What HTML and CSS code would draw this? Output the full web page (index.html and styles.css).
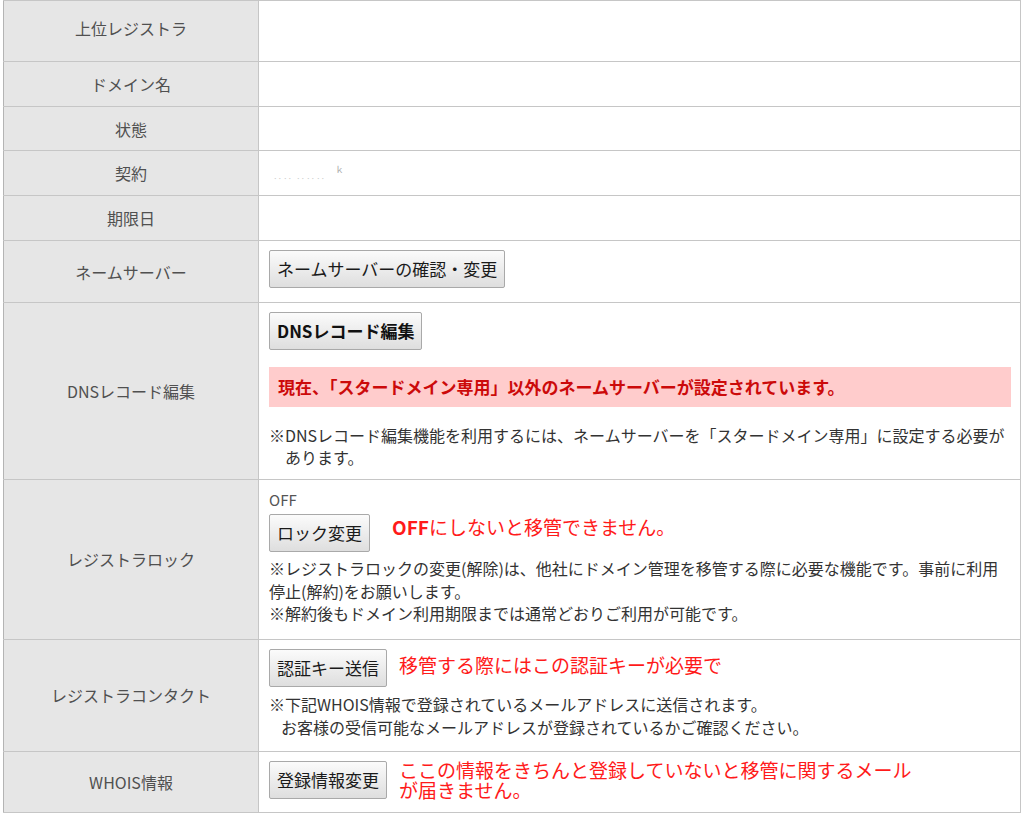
FILE: index.html
```html
<!DOCTYPE html>
<html lang="ja">
<head>
<meta charset="utf-8">
<title>ドメイン情報</title>
<link rel="stylesheet" href="styles.css">
</head>
<body>
<div class="page">
<table class="info">
  <tr class="r-top"><th>上位レジストラ</th><td></td></tr>
  <tr class="r-45"><th>ドメイン名</th><td></td></tr>
  <tr class="r-44"><th>状態</th><td></td></tr>
  <tr class="r-45"><th>契約</th><td class="contract"><span class="blur">‥‥ ‥‥‥</span><span class="blur2">ｋ</span></td></tr>
  <tr class="r-45"><th>期限日</th><td></td></tr>
  <tr><th>ネームサーバー</th><td class="cell-ns"><button class="btn">ネームサーバーの確認・変更</button></td></tr>
  <tr><th>DNSレコード編集</th><td class="cell-dns">
    <button class="btn btn-bold">DNSレコード編集</button>
    <div class="alert">現在、「スタードメイン専用」以外のネームサーバーが設定されています。</div>
    <p class="note hang">※DNSレコード編集機能を利用するには、ネームサーバーを「スタードメイン専用」に設定する必要が<br>あります。</p>
  </td></tr>
  <tr><th>レジストラロック</th><td class="cell-lock">
    <div class="status">OFF</div>
    <div class="btn-row">
      <button class="btn">ロック変更</button>
      <span class="memo memo-lock"><b>OFF</b>にしないと移管できません。</span>
    </div>
    <p class="note note-lock">※レジストラロックの変更(解除)は、他社にドメイン管理を移管する際に必要な機能です。事前に利用<br>停止(解約)をお願いします。<br>※解約後もドメイン利用期限までは通常どおりご利用が可能です。</p>
  </td></tr>
  <tr><th>レジストラコンタクト</th><td class="cell-contact">
    <div class="btn-row">
      <button class="btn">認証キー送信</button>
      <span class="memo memo-key">移管する際にはこの認証キーが必要で</span>
    </div>
    <p class="note note-contact">※下記WHOIS情報で登録されているメールアドレスに送信されます。<br><span class="indent">お客様の受信可能なメールアドレスが登録されているかご確認ください。</span></p>
  </td></tr>
  <tr><th>WHOIS情報</th><td class="cell-whois">
    <div class="btn-row">
      <button class="btn">登録情報変更</button>
      <div class="memo memo-whois">
        <div class="memo-line">ここの情報をきちんと登録していないと移管に関するメール</div>
        <div class="memo-line">が届きません。</div>
      </div>
    </div>
  </td></tr>
</table>
</div>
</body>
</html>
```

FILE: styles.css
```css
html, body {
  margin: 0;
  padding: 0;
  background: #fff;
}
body {
  font-family: "Noto Sans CJK JP", "Noto Sans", sans-serif;
  color: #3a3a3a;
}
.page {
  padding-left: 3px;
  width: 1018px;
}
.info {
  border-collapse: collapse;
  table-layout: fixed;
  width: 1018px;
}
.info th,
.info td {
  border: 1px solid #c6c6c6;
}
.info th {
  width: 254px;
  background: #e6e6e6;
  font-weight: normal;
  font-size: 16px;
  color: #505050;
  text-align: center;
  vertical-align: middle;
  padding: 0;
  border-left-color: #b4b4b4;
}
.info td {
  padding: 9px 9px 0 10px;
  vertical-align: top;
  background: #fff;
}
.r-top { height: 61px; }
.r-top th { padding-bottom: 6px; }
.r-45 { height: 45px; }
.r-44 { height: 44px; }
.r-top td, .r-45 td, .r-44 td { padding: 0; }

.contract {
  position: relative;
}
.blur {
  position: absolute;
  left: 14px;
  top: 21px;
  font-size: 9px;
  letter-spacing: 1px;
  color: #c9c9c9;
}
.blur2 {
  position: absolute;
  left: 76px;
  top: 12px;
  font-size: 9px;
  color: #aaa;
}

.btn {
  display: block;
  height: 38px;
  padding: 0 7px;
  margin: 0;
  font-family: "Noto Sans CJK JP", "Noto Sans", sans-serif;
  font-size: 17px;
  line-height: 36px;
  color: #1a1a1a;
  background: linear-gradient(#fbfbfb, #dedede);
  border: 1px solid #a9a9a9;
  border-radius: 2px;
  white-space: nowrap;
  flex: none;
}
.btn-bold {
  font-weight: bold;
  color: #111;
}

.cell-ns { padding-bottom: 14px !important; }

.alert {
  margin-top: 17px;
  height: 40px;
  line-height: 40px;
  background: #ffcccc;
  color: #cc0a0a;
  font-weight: bold;
  font-size: 17px;
  padding-left: 9px;
  white-space: nowrap;
}
.note {
  margin: 0;
  font-size: 16px;
  line-height: 22px;
  color: #333;
  white-space: nowrap;
}
.hang {
  margin-top: 17px;
  padding-left: 16px;
  text-indent: -16px;
}
.cell-dns { padding-bottom: 11px !important; }

.status {
  font-size: 15px;
  line-height: 22px;
  color: #555;
}
.btn-row {
  display: flex;
  align-items: flex-start;
}
.cell-lock .btn-row { margin-top: 3px; }
.memo {
  color: #ff1a1a;
  font-size: 19px;
  white-space: nowrap;
}
.memo b { font-weight: bold; }
.memo-lock {
  margin-left: 22px;
  line-height: 26px;
}
.note-lock {
  margin-top: 5px;
  line-height: 22.5px;
}
.cell-lock { padding-bottom: 14px !important; }

.memo-key {
  margin-left: 12px;
  line-height: 32px;
}
.note-contact {
  margin-top: 6px;
  line-height: 23px;
}
.indent {
  padding-left: 12px;
}
.cell-contact { padding-bottom: 12px !important; }

.memo-whois {
  margin-left: 12px;
  margin-top: -1px;
}
.memo-line {
  height: 20px;
  line-height: 20px;
}
.cell-whois { padding-bottom: 12px !important; }
```
